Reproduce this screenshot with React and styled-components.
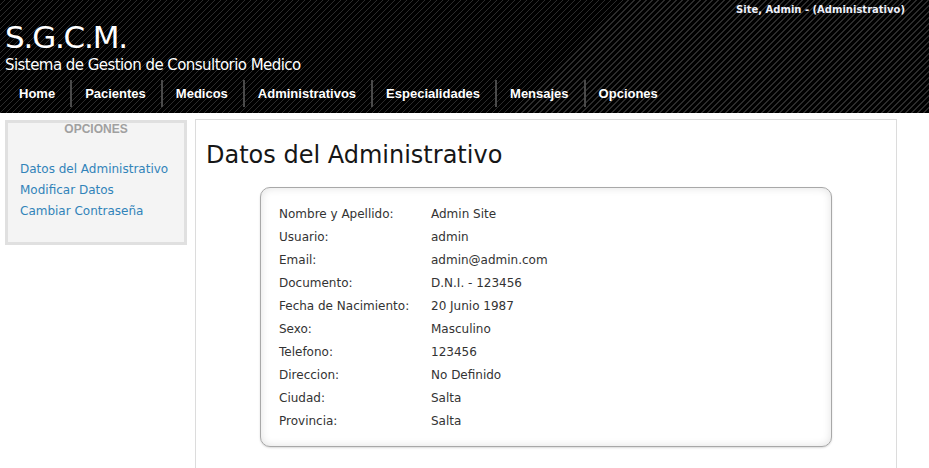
import React from 'react';
import styled, {createGlobalStyle} from "styled-components";

const GlobalStyle = createGlobalStyle`
  html, body {
    margin: 0;
    padding: 0;
    background: #fff;
  }
  body {
    font-family: "DejaVu Sans", Verdana, sans-serif;
    font-size: 12px;
    color: #333;
  }
`

const Header = styled.header`
  height: 113px;
  box-sizing: border-box;
  background-color: #000;
  background-image: repeating-linear-gradient(
    135deg,
    #000 0px,
    #000 3.1px,
    #2c2c2c 3.1px,
    #2c2c2c 4.24px
  );
  color: #fff;
  overflow: hidden;
`
const UserLine = styled.div`
  height: 18px;
  line-height: 20px;
  padding-right: 24px;
  text-align: right;
  font-size: 10px;
  font-weight: bold;
  color: #eef0fa;
`
const Brand = styled.h1`
  margin: 0;
  padding-left: 5px;
  font-size: 31px;
  line-height: 38px;
  font-weight: normal;
  letter-spacing: -1.2px;
`
const Tagline = styled.div`
  padding-left: 5px;
  font-size: 15px;
  line-height: 18px;
  letter-spacing: -0.55px;
`
const Nav = styled.ul`
  list-style: none;
  display: flex;
  margin: 6px 0 0;
  padding: 0 0 0 4px;
`
const NavItem = styled.li`
  height: 27px;
  line-height: 27px;
  padding: 0 15px 0 ${props => props.first ? "15px" : "13px"};
  border-left: ${props => props.first ? "none" : "2px solid #4a4a4a"};
  font-family: "Liberation Sans", Arial, sans-serif;
  font-size: 13px;
  font-weight: bold;
  color: #fff;
`
const Layout = styled.div`
  display: grid;
  grid-template-columns: 182px 702px;
  gap: 8px;
  align-items: start;
  padding: 6px 5px 0;
`
const Sidebar = styled.aside`
  margin-top: 1px;
  border: 3px solid #e0e0e0;
  background: #f4f4f4;
  padding: 0 12px 20px;
`
const SideTitle = styled.div`
  text-align: center;
  line-height: 12px;
  font-family: "Liberation Sans", Arial, sans-serif;
  font-size: 12px;
  font-weight: bold;
  color: #a0a0a0;
`
const SideLinks = styled.ul`
  list-style: none;
  margin: 24px 0 0;
  padding: 0;
`
const SideLink = styled.li`
  line-height: 21px;
  font-size: 12px;
  color: #3183b9;
  white-space: nowrap;
`
const Main = styled.main`
  min-height: 306px;
  border: 1px solid #dcdcdc;
  border-bottom: none;
  padding: 21px 10px;
`
const Title = styled.h2`
  margin: 0;
  font-size: 24px;
  line-height: 28px;
  font-weight: normal;
  color: #161616;
`
const Card = styled.div`
  width: 572px;
  box-sizing: border-box;
  margin: 18px auto 0;
  padding: 15px 18px 13px;
  border: 1px solid #a8a8a8;
  border-radius: 10px;
  background: #fff;
  box-shadow: inset 0 0 8px rgba(0, 0, 0, 0.12), 0 1px 2px rgba(0, 0, 0, 0.15);
`
const InfoGrid = styled.dl`
  display: grid;
  grid-template-columns: 152px 1fr;
  margin: 0;
  line-height: 23px;
  font-size: 12px;
  color: #333;
`
const Label = styled.dt`
  margin: 0;
`
const Value = styled.dd`
  margin: 0;
`

const menu = ["Home", "Pacientes", "Medicos", "Administrativos", "Especialidades", "Mensajes", "Opciones"];

const datos = [
    ["Nombre y Apellido:", "Admin Site"],
    ["Usuario:", "admin"],
    ["Email:", "admin@admin.com"],
    ["Documento:", "D.N.I. - 123456"],
    ["Fecha de Nacimiento:", "20 Junio 1987"],
    ["Sexo:", "Masculino"],
    ["Telefono:", "123456"],
    ["Direccion:", "No Definido"],
    ["Ciudad:", "Salta"],
    ["Provincia:", "Salta"],
];

const App = () => {
    return (
        <>
            <GlobalStyle/>
            <Header>
                <UserLine>Site, Admin - (Administrativo)</UserLine>
                <Brand>S.G.C.M.</Brand>
                <Tagline>Sistema de Gestion de Consultorio Medico</Tagline>
                <Nav>
                    {menu.map((item, i) => (
                        <NavItem key={item} first={i === 0}>{item}</NavItem>
                    ))}
                </Nav>
            </Header>
            <Layout>
                <Sidebar>
                    <SideTitle>OPCIONES</SideTitle>
                    <SideLinks>
                        <SideLink>Datos del Administrativo</SideLink>
                        <SideLink>Modificar Datos</SideLink>
                        <SideLink>Cambiar Contraseña</SideLink>
                    </SideLinks>
                </Sidebar>
                <Main>
                    <Title>Datos del Administrativo</Title>
                    <Card>
                        <InfoGrid>
                            {datos.map(([label, value]) => (
                                <React.Fragment key={label}>
                                    <Label>{label}</Label>
                                    <Value>{value}</Value>
                                </React.Fragment>
                            ))}
                        </InfoGrid>
                    </Card>
                </Main>
            </Layout>
        </>
    );
};

export default App;
